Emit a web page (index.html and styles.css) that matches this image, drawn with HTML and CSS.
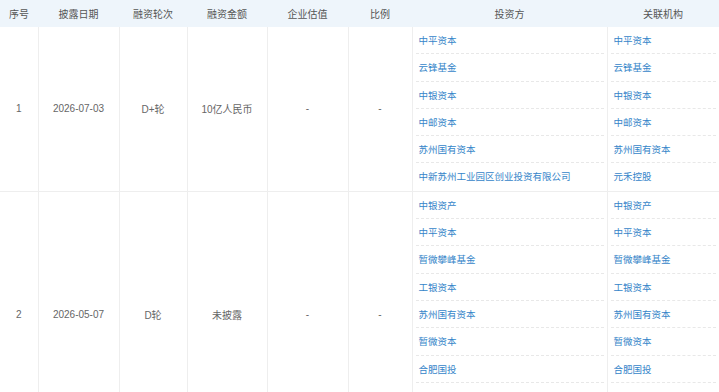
FILE: index.html
```html
<!DOCTYPE html>
<html lang="zh">
<head>
<meta charset="utf-8">
<link rel="stylesheet" href="styles.css">
</head>
<body>
<table class="fin">
  <colgroup>
    <col class="c-no"><col class="c-date"><col class="c-round"><col class="c-amt"><col class="c-val"><col class="c-ratio"><col class="c-inv"><col class="c-org">
  </colgroup>
  <thead>
    <tr><th>序号</th><th>披露日期</th><th>融资轮次</th><th>融资金额</th><th>企业估值</th><th>比例</th><th>投资方</th><th>关联机构</th></tr>
  </thead>
  <tbody>
    <tr>
      <td>1</td><td>2026-07-03</td><td>D+轮</td><td>10亿人民币</td><td>-</td><td>-</td>
      <td class="list"><div class="item">中平资本</div><div class="item">云锋基金</div><div class="item">中银资本</div><div class="item">中邮资本</div><div class="item">苏州国有资本</div><div class="item">中新苏州工业园区创业投资有限公司</div></td>
      <td class="list"><div class="item">中平资本</div><div class="item">云锋基金</div><div class="item">中银资本</div><div class="item">中邮资本</div><div class="item">苏州国有资本</div><div class="item">元禾控股</div></td>
    </tr>
    <tr>
      <td>2</td><td>2026-05-07</td><td>D轮</td><td>未披露</td><td>-</td><td>-</td>
      <td class="list"><div class="item">中银资产</div><div class="item">中平资本</div><div class="item">暂微攀峰基金</div><div class="item">工银资本</div><div class="item">苏州国有资本</div><div class="item">暂微资本</div><div class="item">合肥国投</div><div class="item">元禾控股</div><div class="item">中邮资本</div></td>
      <td class="list"><div class="item">中银资产</div><div class="item">中平资本</div><div class="item">暂微攀峰基金</div><div class="item">工银资本</div><div class="item">苏州国有资本</div><div class="item">暂微资本</div><div class="item">合肥国投</div><div class="item">元禾控股</div><div class="item">中邮资本</div></td>
    </tr>
  </tbody>
</table>
</body>
</html>
```
FILE: styles.css
```css
html, body {
  margin: 0;
  padding: 0;
  background: #fff;
}
body {
  font-family: "Liberation Sans", "Noto Sans CJK SC", sans-serif;
  font-size: 10px;
  color: #666;
}
.fin {
  border-collapse: collapse;
  table-layout: fixed;
  width: 719px;
}
.c-no { width: 38px; }
.c-date { width: 81px; }
.c-round { width: 68px; }
.c-amt { width: 80px; }
.c-val { width: 81px; }
.c-ratio { width: 64px; }
.c-inv { width: 195px; }
.c-org { width: 112px; }
.fin th {
  height: 27px;
  padding: 0;
  background: #eef5fb;
  color: #555;
  font-weight: normal;
  font-size: 10px;
  text-align: center;
}
.fin td {
  padding: 0;
  text-align: center;
  vertical-align: middle;
  border: 1px solid #eeeeee;
  border-top: none;
}
.fin td:first-child { border-left: none; }
.fin td:last-child { border-right: none; }
.fin td.list {
  text-align: left;
  vertical-align: top;
  padding: 0 3px;
}
.item {
  box-sizing: border-box;
  height: 27.3px;
  line-height: 27px;
  padding-left: 3px;
  font-size: 9.5px;
  color: #3585c9;
  border-bottom: 1px dashed #e8e8e8;
  white-space: nowrap;
}
.item:last-child {
  border-bottom: none;
}
```
